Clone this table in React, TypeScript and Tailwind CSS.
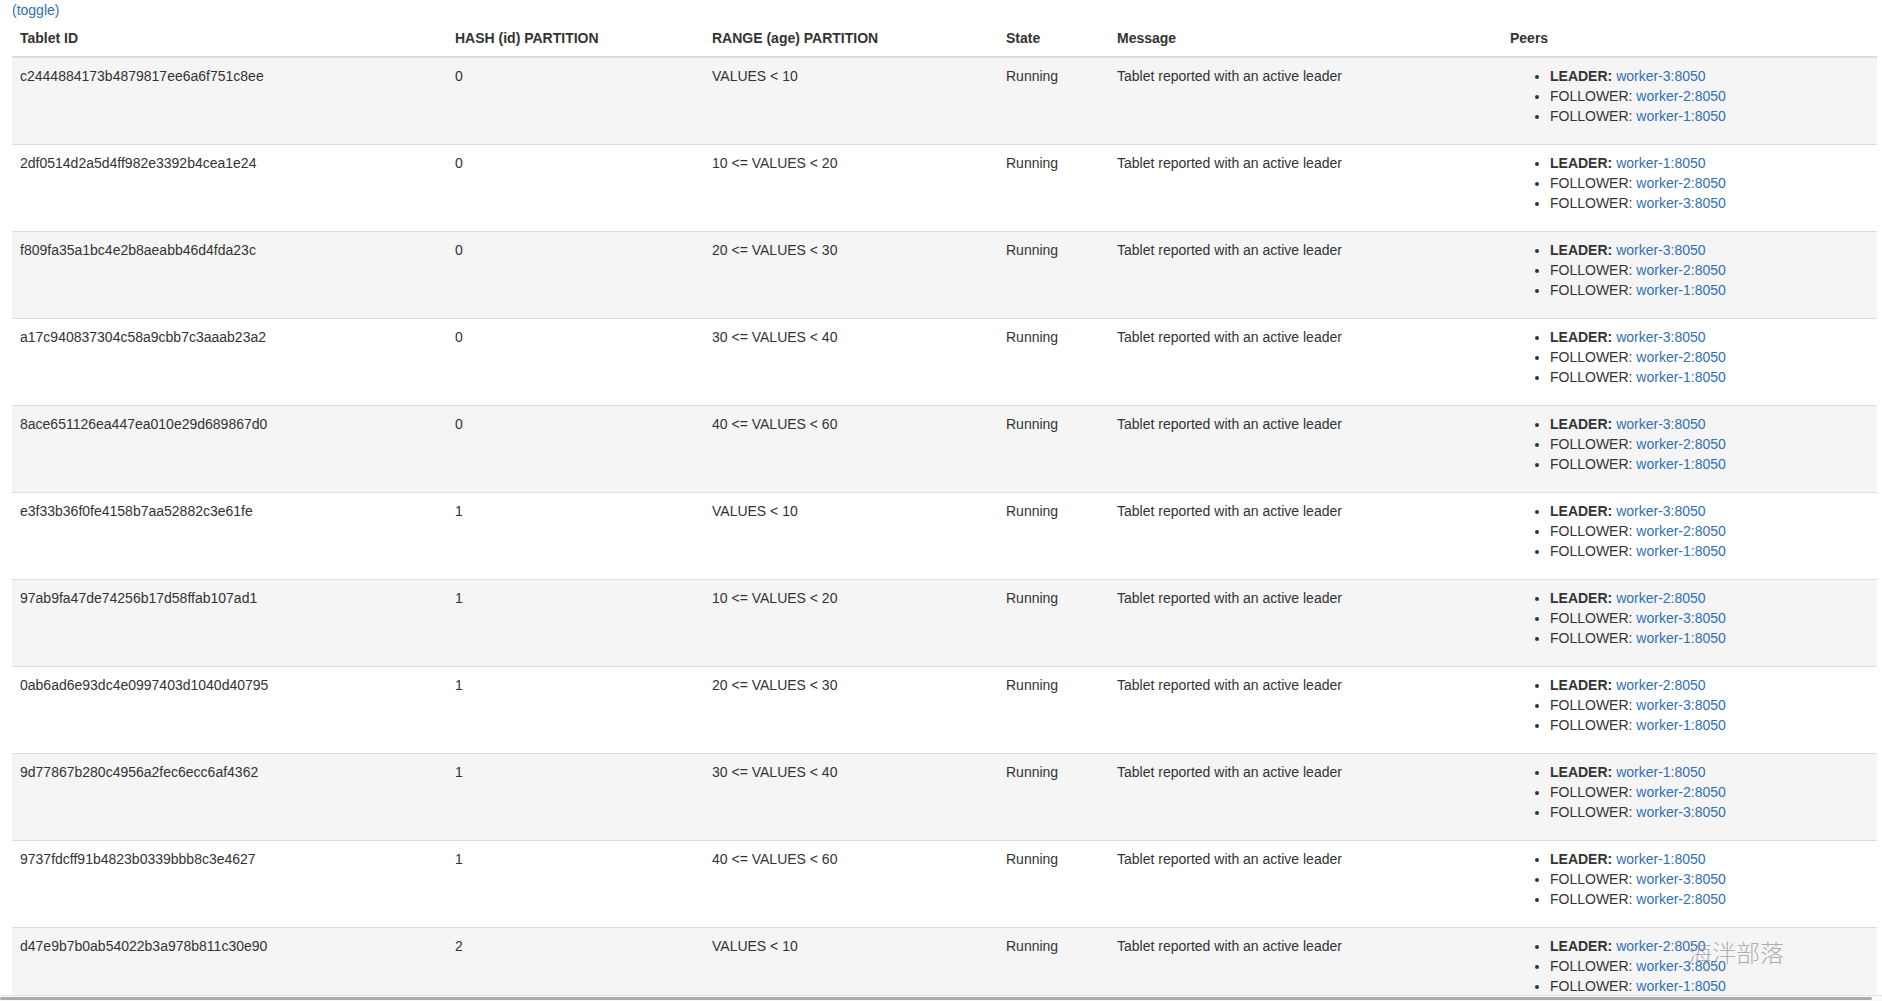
type Tablet = {
  id: string;
  hash: string;
  range: string;
  leader: string;
  followers: [string, string];
};

const tablets: Tablet[] = [
  { id: "c2444884173b4879817ee6a6f751c8ee", hash: "0", range: "VALUES < 10", leader: "worker-3:8050", followers: ["worker-2:8050", "worker-1:8050"] },
  { id: "2df0514d2a5d4ff982e3392b4cea1e24", hash: "0", range: "10 <= VALUES < 20", leader: "worker-1:8050", followers: ["worker-2:8050", "worker-3:8050"] },
  { id: "f809fa35a1bc4e2b8aeabb46d4fda23c", hash: "0", range: "20 <= VALUES < 30", leader: "worker-3:8050", followers: ["worker-2:8050", "worker-1:8050"] },
  { id: "a17c940837304c58a9cbb7c3aaab23a2", hash: "0", range: "30 <= VALUES < 40", leader: "worker-3:8050", followers: ["worker-2:8050", "worker-1:8050"] },
  { id: "8ace651126ea447ea010e29d689867d0", hash: "0", range: "40 <= VALUES < 60", leader: "worker-3:8050", followers: ["worker-2:8050", "worker-1:8050"] },
  { id: "e3f33b36f0fe4158b7aa52882c3e61fe", hash: "1", range: "VALUES < 10", leader: "worker-3:8050", followers: ["worker-2:8050", "worker-1:8050"] },
  { id: "97ab9fa47de74256b17d58ffab107ad1", hash: "1", range: "10 <= VALUES < 20", leader: "worker-2:8050", followers: ["worker-3:8050", "worker-1:8050"] },
  { id: "0ab6ad6e93dc4e0997403d1040d40795", hash: "1", range: "20 <= VALUES < 30", leader: "worker-2:8050", followers: ["worker-3:8050", "worker-1:8050"] },
  { id: "9d77867b280c4956a2fec6ecc6af4362", hash: "1", range: "30 <= VALUES < 40", leader: "worker-1:8050", followers: ["worker-2:8050", "worker-3:8050"] },
  { id: "9737fdcff91b4823b0339bbb8c3e4627", hash: "1", range: "40 <= VALUES < 60", leader: "worker-1:8050", followers: ["worker-3:8050", "worker-2:8050"] },
  { id: "d47e9b7b0ab54022b3a978b811c30e90", hash: "2", range: "VALUES < 10", leader: "worker-2:8050", followers: ["worker-3:8050", "worker-1:8050"] },
];

const th = "px-[8px] py-[8px] text-left align-bottom font-bold border-b-2 border-[#ddd]";
const td = "px-[8px] py-[8px] align-top border-t border-[#ddd]";

function Peers({ t }: { t: Tablet }) {
  return (
    <ul className="list-disc pl-[40px] mb-[10px]">
      <li>
        <b>LEADER:</b> <a href="#" className="text-[#2f70b6]">{t.leader}</a>
      </li>
      {t.followers.map((f, i) => (
        <li key={i}>
          FOLLOWER: <a href="#" className="text-[#2f70b6]">{f}</a>
        </li>
      ))}
    </ul>
  );
}

export default function App() {
  return (
    <div className="relative flex h-[1001px] flex-col overflow-hidden bg-white text-[14px] leading-[20px] text-[#333] [font-family:'Liberation_Sans',Arial,sans-serif]">
      <div className="h-[20px] pl-[12px]">
        <a href="#" className="text-[#2f70b6]">(toggle)</a>
      </div>

      <div className="min-h-0 flex-1 overflow-hidden pl-[12px]">
        <table className="w-[1865px] table-fixed border-collapse">
          <colgroup>
            <col className="w-[435px]" />
            <col className="w-[257px]" />
            <col className="w-[294px]" />
            <col className="w-[111px]" />
            <col className="w-[393px]" />
            <col className="w-[375px]" />
          </colgroup>
          <thead>
            <tr>
              <th className={th}>Tablet ID</th>
              <th className={th}>HASH (id) PARTITION</th>
              <th className={th}>RANGE (age) PARTITION</th>
              <th className={th}>State</th>
              <th className={th}>Message</th>
              <th className={th}>Peers</th>
            </tr>
          </thead>
          <tbody>
            {tablets.map((t, i) => (
              <tr key={t.id} className={i % 2 === 0 ? "bg-[#f5f5f5]" : "bg-white"}>
                <td className={td}>{t.id}</td>
                <td className={td}>{t.hash}</td>
                <td className={td}>{t.range}</td>
                <td className={td}>Running</td>
                <td className={td}>Tablet reported with an active leader</td>
                <td className={td}>
                  <Peers t={t} />
                </td>
              </tr>
            ))}
          </tbody>
        </table>
      </div>

      {/* horizontal scrollbar of the table wrapper */}
      <div className="h-[6px] border-t border-[#e2e2e2] bg-[#fafafa] pt-[1px]">
        <div className="h-[3px] w-[1872px] rounded-full bg-[#ababab]" />
      </div>

      <div className="pointer-events-none absolute left-[1688px] top-[937px] text-[24px] leading-[30px] text-[#9a9a9a]/80 [font-family:'Noto_Sans_CJK_SC',sans-serif] font-light">
        海泮部落
      </div>
    </div>
  );
}
